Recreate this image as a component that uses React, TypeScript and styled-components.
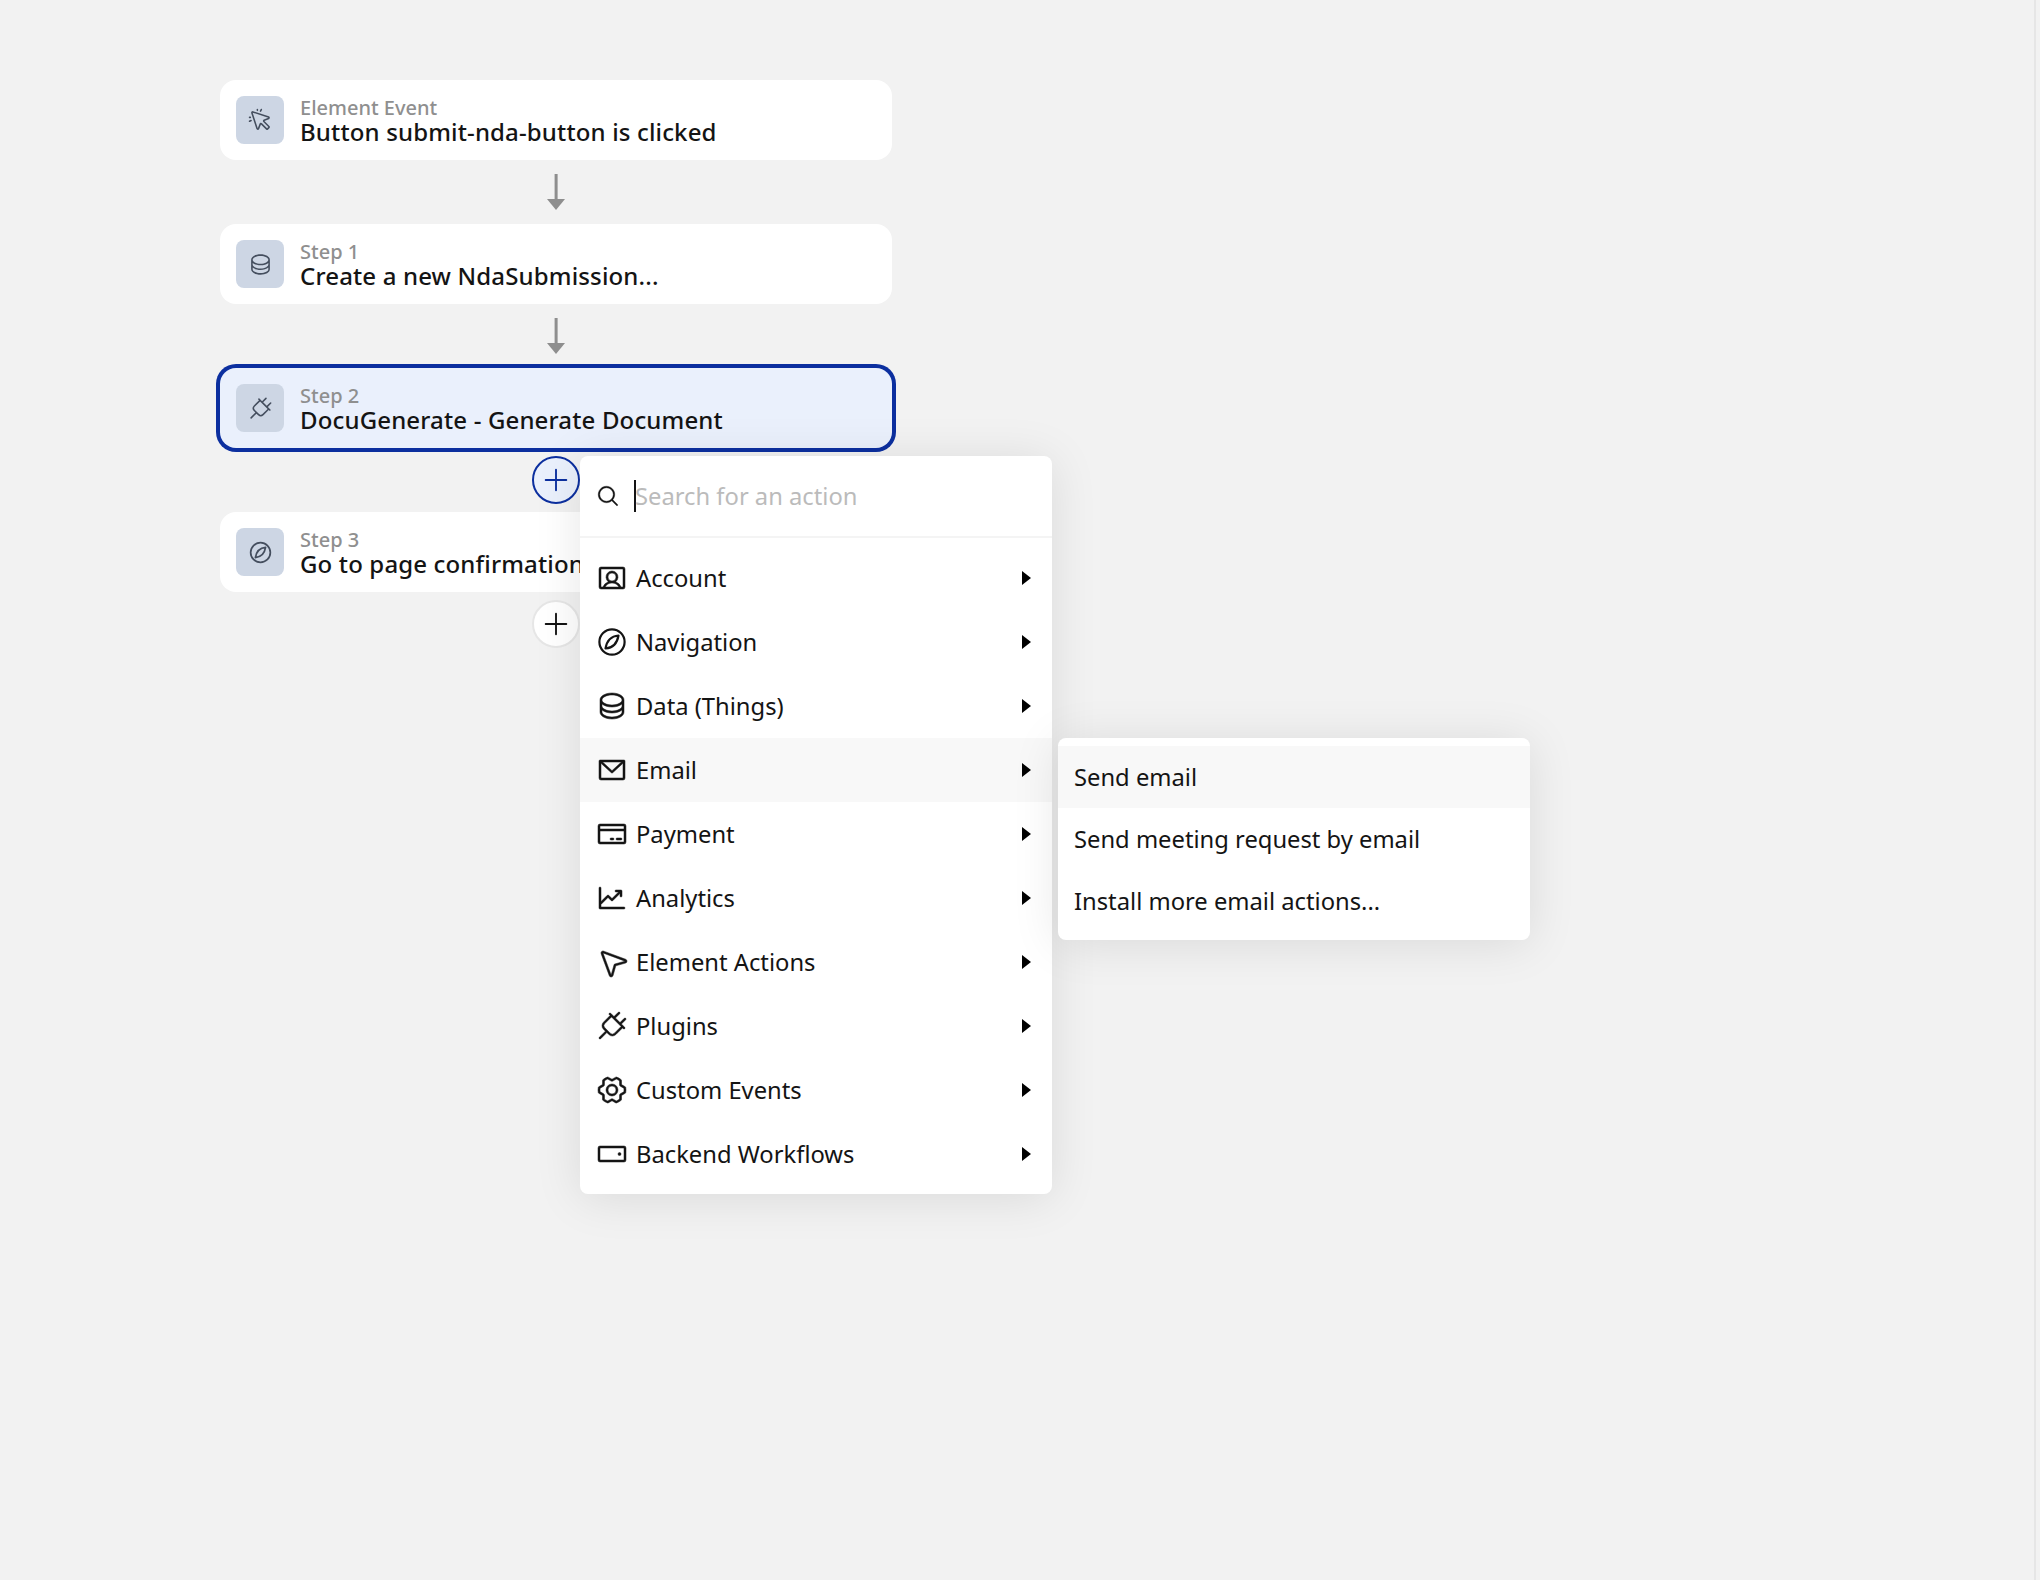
import React from "react";
import styled, { createGlobalStyle } from "styled-components";
import {
  PiCursorClick, PiDatabase, PiPlug, PiPlus, PiMagnifyingGlass,
  PiUserRectangle, PiEnvelopeSimple, PiCreditCard, PiChartLineUp, PiNavigationArrow,
  PiGearSix, PiHardDrive,
} from "react-icons/pi";

const Global = createGlobalStyle`
  html, body { margin: 0; padding: 0; background: #f2f2f2; }
  body { font-family: "Noto Sans", "Open Sans", sans-serif; overflow: hidden; }
  * { box-sizing: border-box; }
`;

const Canvas = styled.div`
  position: relative;
  width: 2036px;
  height: 1580px;
  padding: 80px 0 0 220px;
  background: #f2f2f2;
  border-right: 2px solid #e6e6e6;
`;

const FlowColumn = styled.div`
  width: 672px;
  display: flex;
  flex-direction: column;
`;

const Card = styled.div<{ $selected?: boolean }>`
  height: 80px;
  display: flex;
  align-items: center;
  gap: 16px;
  padding: 0 16px;
  border-radius: 16px;
  background: ${(p) => (p.$selected ? "#eaf0fc" : "#ffffff")};
  box-shadow: ${(p) => (p.$selected ? "0 0 0 4px #0c2f9f" : "none")};
`;

const IconTile = styled.div`
  width: 48px;
  height: 48px;
  flex: none;
  display: flex;
  align-items: center;
  justify-content: center;
  border-radius: 8px;
  background: #cdd6e4;
  color: #444e5e;
  font-size: 25px;
`;

const CardText = styled.div`
  display: flex;
  flex-direction: column;
  white-space: nowrap;
`;

const CardLabel = styled.span`
  font-size: 20px;
  line-height: 24px;
  font-weight: 500;
  color: #8f8f8f;
  transform: translateY(1px);
`;

const CardTitle = styled.span`
  font-size: 24px;
  line-height: 26px;
  font-weight: 500;
  letter-spacing: 0.15px;
  color: #141414;
`;

const Connector = styled.div`
  height: 64px;
  display: flex;
  align-items: center;
  justify-content: center;
  color: #8e8e8e;
`;

const AddButton = styled.div<{ $active?: boolean }>`
  width: 48px;
  height: 48px;
  display: flex;
  align-items: center;
  justify-content: center;
  border-radius: 50%;
  font-size: 30px;
  background: ${(p) => (p.$active ? "#eaf0fc" : "#ffffff")};
  border: 2px solid ${(p) => (p.$active ? "#0c2f9f" : "#e6e6e6")};
  color: ${(p) => (p.$active ? "#0c2f9f" : "#141414")};
`;

const Menu = styled.div`
  position: absolute;
  left: 580px;
  top: 456px;
  width: 472px;
  background: #ffffff;
  border-radius: 8px;
  box-shadow: 0 4px 48px rgba(0, 0, 0, 0.1);
`;

const SearchBar = styled.div`
  height: 82px;
  display: flex;
  align-items: center;
  padding: 0 16px;
  border-bottom: 2px solid #f4f4f4;
`;

const SearchIcon = styled.span`
  display: flex;
  width: 38px;
  font-size: 24px;
  color: #141414;
  svg {
    stroke: currentColor;
    stroke-width: 4;
  }
`;

const Caret = styled.span`
  width: 2px;
  height: 32px;
  background: #141414;
  margin-right: -1px;
`;

const Placeholder = styled.span`
  font-size: 23.75px;
  line-height: 30px;
  color: #bbbbbb;
`;

const MenuList = styled.div`
  padding: 8px 0;
`;

const Row = styled.div<{ $hover?: boolean }>`
  height: 64px;
  display: flex;
  align-items: center;
  padding: 0 21px 0 16px;
  background: ${(p) => (p.$hover ? "#f8f8f8" : "transparent")};
  color: #141414;
`;

const RowIcon = styled.span`
  display: flex;
  width: 40px;
  font-size: 32px;
  svg {
    stroke: currentColor;
    stroke-width: 4;
  }
`;

const RowLabel = styled.span`
  flex: 1;
  font-size: 23.75px;
  line-height: 32px;
`;

const Triangle = styled.span`
  width: 0;
  height: 0;
  border-style: solid;
  border-width: 7px 0 7px 9px;
  border-color: transparent transparent transparent #000000;
`;

const Submenu = styled.div`
  position: absolute;
  left: 478px;
  top: 282px;
  width: 472px;
  padding: 8px 0;
  background: #ffffff;
  border-radius: 8px;
  box-shadow: 0 4px 48px rgba(0, 0, 0, 0.1);
`;

const SubRow = styled.div<{ $hover?: boolean }>`
  height: 62px;
  display: flex;
  align-items: center;
  padding: 0 16px 1px;
  font-size: 23.75px;
  color: #141414;
  background: ${(p) => (p.$hover ? "#f8f8f8" : "transparent")};
`;

const DownArrow = () => (
  <svg width="18" height="36" viewBox="0 0 18 36" fill="currentColor">
    <rect x="7.6" y="0" width="3" height="28" />
    <path d="M0 25h18l-9 11z" />
  </svg>
);

const LeafCompass = () => (
  <svg width="1em" height="1em" viewBox="0 0 32 32" fill="none">
    <g stroke="currentColor" strokeWidth="2.2" fill="none" strokeLinejoin="round">
      <circle cx="16" cy="16" r="12.6" />
      <path d="M22.5 9.5C16 10 11 13.5 9.5 22.5C16 22 21 18.5 22.5 9.5Z" />
    </g>
  </svg>
);

const steps = [
  { label: "Element Event", title: "Button submit-nda-button is clicked", icon: <PiCursorClick /> },
  { label: "Step 1", title: "Create a new NdaSubmission...", icon: <PiDatabase /> },
  { label: "Step 2", title: "DocuGenerate - Generate Document", icon: <PiPlug />, selected: true },
  { label: "Step 3", title: "Go to page confirmation", icon: <LeafCompass /> },
];

const rows = [
  { label: "Account", icon: <PiUserRectangle /> },
  { label: "Navigation", icon: <LeafCompass /> },
  { label: "Data (Things)", icon: <PiDatabase /> },
  { label: "Email", icon: <PiEnvelopeSimple />, hover: true },
  { label: "Payment", icon: <PiCreditCard /> },
  { label: "Analytics", icon: <PiChartLineUp /> },
  { label: "Element Actions", icon: <PiNavigationArrow /> },
  { label: "Plugins", icon: <PiPlug /> },
  { label: "Custom Events", icon: <PiGearSix /> },
  { label: "Backend Workflows", icon: <PiHardDrive /> },
];

export default function App() {
  return (
    <Canvas>
      <Global />
      <FlowColumn>
        {steps.map((s, i) => (
          <React.Fragment key={s.label}>
            <Card $selected={s.selected}>
              <IconTile>{s.icon}</IconTile>
              <CardText>
                <CardLabel>{s.label}</CardLabel>
                <CardTitle>{s.title}</CardTitle>
              </CardText>
            </Card>
            <Connector>
              {i < 2 ? <DownArrow /> : <AddButton $active={i === 2}><PiPlus /></AddButton>}
            </Connector>
          </React.Fragment>
        ))}
      </FlowColumn>
      <Menu>
        <SearchBar>
          <SearchIcon><PiMagnifyingGlass /></SearchIcon>
          <Caret />
          <Placeholder>Search for an action</Placeholder>
        </SearchBar>
        <MenuList>
          {rows.map((r) => (
            <Row key={r.label} $hover={r.hover}>
              <RowIcon>{r.icon}</RowIcon>
              <RowLabel>{r.label}</RowLabel>
              <Triangle />
            </Row>
          ))}
        </MenuList>
        <Submenu>
          <SubRow $hover>Send email</SubRow>
          <SubRow>Send meeting request by email</SubRow>
          <SubRow>Install more email actions...</SubRow>
        </Submenu>
      </Menu>
    </Canvas>
  );
}
